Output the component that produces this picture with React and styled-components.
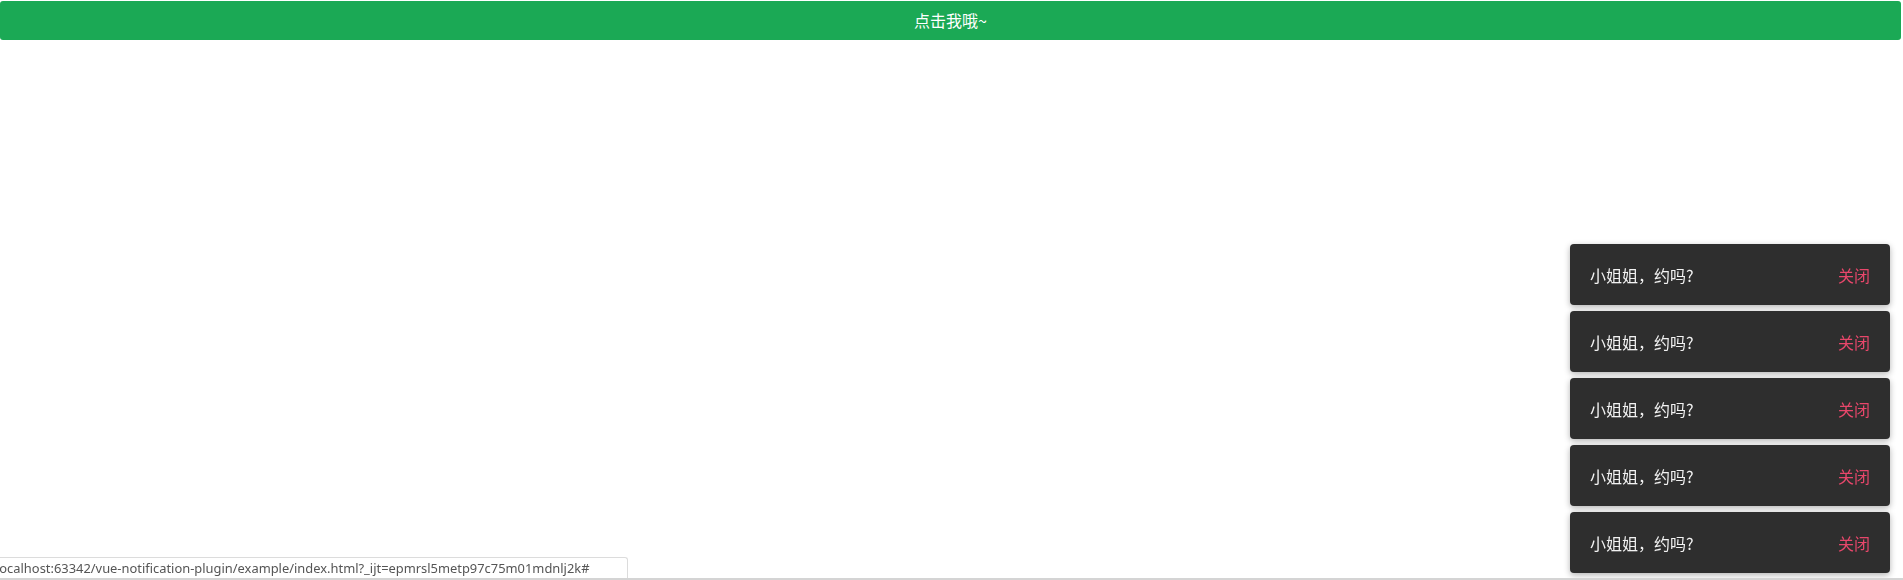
import React from "react";
import styled, { createGlobalStyle } from "styled-components";

const Global = createGlobalStyle`
  html, body { margin: 0; padding: 0; background: #fff; }
  body { font-family: "Noto Sans CJK SC", "Noto Sans", sans-serif; }
`;

const Page = styled.div`
  width: 100%;
  height: 580px;
  padding-top: 1px;
  box-sizing: border-box;
`;

const MainButton = styled.button`
  display: block;
  width: 1901px;
  height: 39px;
  margin: 0;
  padding: 0;
  border: none;
  border-radius: 3px;
  background: #1ba955;
  color: #fff;
  font-family: "Noto Sans CJK SC", sans-serif;
  font-size: 16px;
  line-height: 39px;
  text-align: center;
  cursor: pointer;
`;

const Stack = styled.div`
  position: fixed;
  right: 13px;
  bottom: 7px;
  width: 320px;
  display: flex;
  flex-direction: column;
  gap: 6px;
`;

const Toast = styled.div`
  height: 61px;
  box-sizing: border-box;
  padding: 0 20px;
  display: flex;
  align-items: center;
  justify-content: space-between;
  background: #2e2e2e;
  border-radius: 4px;
  box-shadow: 0 2px 6px rgba(0, 0, 0, 0.3);
  font-family: "Noto Sans CJK SC", sans-serif;
  font-size: 16px;
`;

const Message = styled.span`
  color: #f2f2f2;
`;

const Close = styled.span`
  color: #e8476b;
  cursor: pointer;
`;

const StatusBar = styled.div`
  position: fixed;
  left: 0;
  bottom: 1px;
  width: 628px;
  height: 22px;
  box-sizing: border-box;
  border: 1px solid #dcdcdc;
  border-left: none;
  border-bottom: none;
  border-top-right-radius: 3px;
  background: #fff;
  color: #555;
  font-family: "Noto Sans", "Liberation Sans", sans-serif;
  font-size: 12.9px;
  line-height: 21px;
  white-space: nowrap;
  overflow: hidden;
`;

const StatusText = styled.span`
  display: inline-block;
  margin-left: -4px;
`;

const BottomEdge = styled.div`
  position: fixed;
  left: 0;
  right: 0;
  bottom: 0;
  height: 2px;
  background: #d4d4d4;
`;

export default function App() {
  const items = [0, 1, 2, 3, 4];
  return (
    <Page>
      <Global />
      <MainButton>点击我哦~</MainButton>
      <Stack>
        {items.map((i) => (
          <Toast key={i}>
            <Message>小姐姐，约吗?</Message>
            <Close>关闭</Close>
          </Toast>
        ))}
      </Stack>
      <StatusBar>
        <StatusText>localhost:63342/vue-notification-plugin/example/index.html?_ijt=epmrsl5metp97c75m01mdnlj2k#</StatusText>
      </StatusBar>
      <BottomEdge />
    </Page>
  );
}
